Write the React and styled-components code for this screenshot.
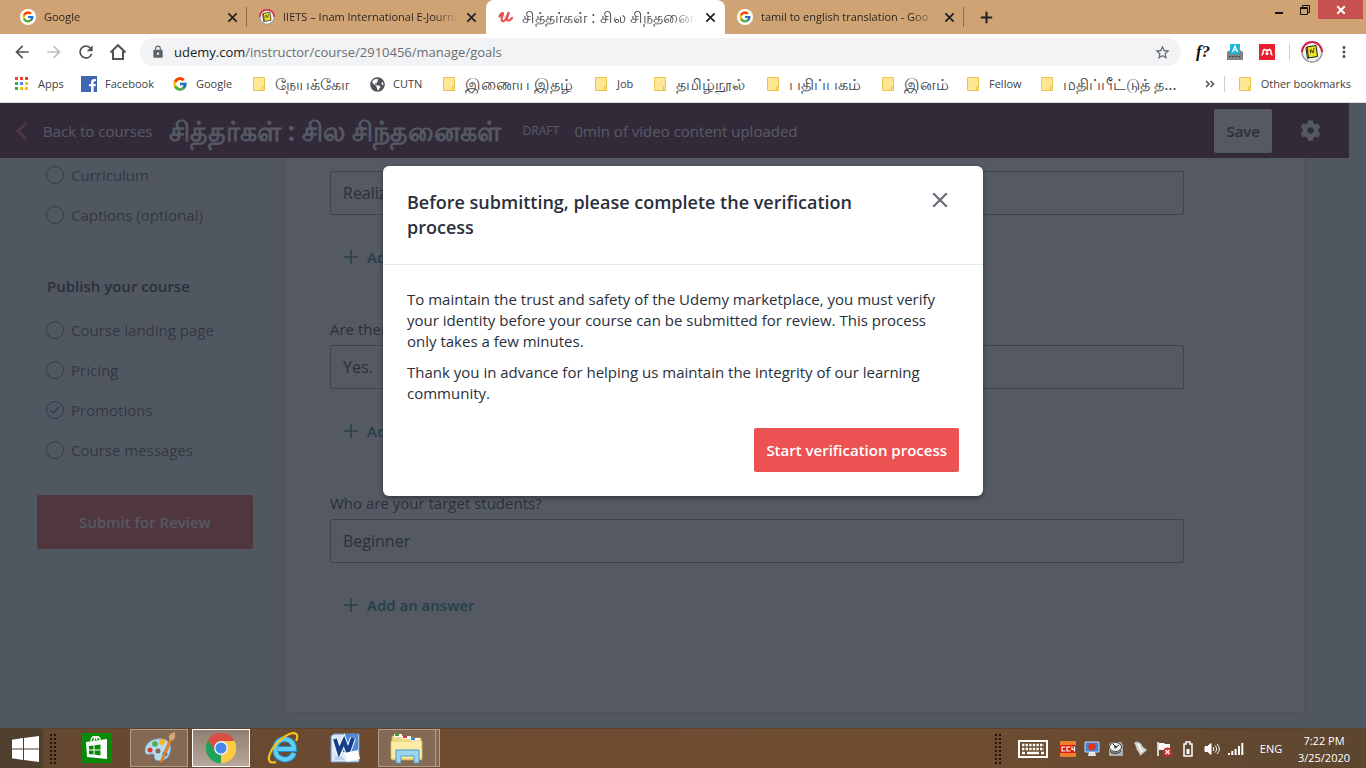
import React from 'react';
import styled, { createGlobalStyle } from 'styled-components';
import { FcGoogle } from 'react-icons/fc';
import { FaCog, FaFacebookF, FaGlobeAmericas } from 'react-icons/fa';
import { MdArrowBack, MdArrowForward, MdRefresh, MdLock, MdStarOutline, MdMoreVert } from 'react-icons/md';

const GlobalStyle = createGlobalStyle`
  * {
    box-sizing: border-box;
  }
  body {
    margin: 0;
    font-family: "Open Sans", "Noto Sans", sans-serif;
  }
  button, input {
    font-family: inherit;
  }
  button {
    border: 0;
    padding: 0;
    background: none;
    cursor: pointer;
  }
  a {
    color: inherit;
    text-decoration: none;
  }
  svg {
    display: block;
    flex-shrink: 0;
  }
`;

const Desktop = styled.div`
  display: flex;
  flex-direction: column;
  height: 100vh;
  overflow: hidden;
`;

/* ---------- tab strip ---------- */

const TabStrip = styled.div`
  display: flex;
  height: 34px;
  padding-left: 8px;
  background: #cfa374;
`;

const Tab = styled.div`
  display: flex;
  align-items: center;
  gap: 8px;
  width: 239px;
  padding: 0 9px 0 12px;
  border-radius: 8px 8px 0 0;
  background: ${({ $active }) => ($active ? '#fff' : 'transparent')};
  color: ${({ $active }) => ($active ? '#45484c' : '#2b2622')};
`;

const TabTitle = styled.span`
  flex: 1;
  min-width: 0;
  overflow: hidden;
  white-space: nowrap;
  font-size: ${({ $big }) => ($big ? '16px' : '11px')};
  line-height: 24px;
  mask-image: linear-gradient(to right, #000 86%, transparent);
`;

const TabClose = styled.button`
  display: flex;
  color: #202124;
`;

const TabDivider = styled.span`
  align-self: center;
  width: 1px;
  height: 20px;
  margin-left: -1px;
  background: #8b6d4d;
`;

const NewTab = styled.button`
  align-self: center;
  margin-left: 16px;
  color: #202124;
`;

const WindowButtons = styled.div`
  display: flex;
  align-items: flex-start;
  margin-left: auto;
  padding-right: 3px;
`;

const WindowButton = styled.button`
  display: flex;
  align-items: center;
  justify-content: center;
  width: ${({ $close }) => ($close ? '45px' : '26px')};
  height: 19px;
  background: ${({ $close }) => ($close ? '#c75050' : 'transparent')};
`;

/* ---------- toolbar ---------- */

const Toolbar = styled.div`
  display: flex;
  align-items: center;
  height: 36px;
  padding: 0 6px;
  background: #fff;
`;

const ToolButton = styled.button`
  display: flex;
  align-items: center;
  justify-content: center;
  width: 32px;
  height: 28px;
  color: ${({ $faded }) => ($faded ? '#bdbfc2' : '#4f5357')};
`;

const AddressBar = styled.label`
  display: flex;
  flex: 1;
  align-items: center;
  height: 28px;
  margin: 0 6px;
  padding: 0 10px 0 11px;
  border-radius: 14px;
  background: #f1f3f4;
  color: #202124;
  font-size: 13px;
`;

const Host = styled.span`
  margin-left: 9px;
`;

const PathInput = styled.input`
  flex: 1;
  padding: 0;
  border: 0;
  outline: 0;
  background: transparent;
  color: #6a6e73;
  font-size: 13px;
`;

const ToolDivider = styled.span`
  width: 1px;
  height: 16px;
  margin: 0 6px;
  background: #cdcfd2;
`;

const FunctionMark = styled.span`
  color: #111;
  font: italic bold 17px "Liberation Serif", serif;
`;

/* ---------- bookmarks ---------- */

const BookmarkBar = styled.nav`
  display: flex;
  align-items: center;
  height: 33px;
  padding: 0 15px 4px 14px;
  border-bottom: 1px solid #d9dadd;
  background: #fff;
`;

const Bookmark = styled.a`
  display: flex;
  align-items: center;
  gap: 8px;
  width: ${({ $width }) => ($width ? `${$width}px` : 'auto')};
  color: #3c4043;
  font-size: ${({ $big }) => ($big ? '16px' : '11px')};
  line-height: 24px;
  white-space: nowrap;
`;

const MoreBookmarks = styled.button`
  margin-left: auto;
  color: #4f5357;
`;

const BookmarkDivider = styled(ToolDivider)`
  margin: 0 12px 0 9px;
`;

/* ---------- udemy page ---------- */

const Page = styled.div`
  position: relative;
  display: flex;
  flex: 1;
  flex-direction: column;
  min-height: 0;
  padding-right: 17px;
  overflow: hidden;
  background: #f0f2f5;
  color: #29303b;
  font-size: 15px;
`;

const CourseHeader = styled.header`
  z-index: 1;
  display: flex;
  align-items: center;
  height: 55px;
  padding: 0 28px 0 16px;
  background: #561236;
  color: #fff;
  white-space: nowrap;
`;

const BackLink = styled.a`
  display: flex;
  align-items: center;
  gap: 15px;
`;

const CourseTitle = styled.h1`
  width: 338px;
  margin: 0 16px;
  font-size: 27px;
  font-weight: 700;
  line-height: 40px;
`;

const Draft = styled.span`
  width: 36px;
  margin-right: 16px;
  font-size: 12px;
`;

const SaveButton = styled.button`
  height: 44px;
  margin: 0 28px 0 auto;
  padding: 0 12px;
  border-radius: 2px;
  background: #fff;
  color: #29303b;
  font-size: 15px;
  font-weight: 600;
`;

const SettingsButton = styled.button`
  color: #fff;
`;

const Content = styled.div`
  display: flex;
  flex: 1;
  min-height: 0;
`;

const Sidebar = styled.aside`
  width: 285px;
  padding: 5px 32px 0 37px;
`;

const NavList = styled.ul`
  display: flex;
  flex-direction: column;
  gap: 16px;
  margin: 0;
  padding: 0 0 0 9px;
  list-style: none;
`;

const NavItem = styled.a`
  display: flex;
  align-items: center;
  gap: 7px;
  line-height: 24px;
  color: #505763;
`;

const NavHeading = styled.h2`
  margin: 47px 0 20px 10px;
  font-size: 15px;
  font-weight: 600;
  line-height: 24px;
`;

const SubmitButton = styled.button`
  width: 100%;
  height: 54px;
  margin-top: 33px;
  border-radius: 2px;
  background: #ec5252;
  color: #fff;
  font-size: 15px;
  font-weight: 600;
`;

const Panel = styled.main`
  flex: 1;
  margin: 0 45px 16px 0;
  padding: 13px 120px 0 45px;
  background: #fff;
  box-shadow: 0 0 8px 2px rgba(41, 48, 59, 0.12);
`;

const Question = styled.div`
  margin-bottom: 40px;
`;

const QuestionLabel = styled.label`
  display: block;
  margin-bottom: 5px;
  line-height: 21px;
`;

const AnswerInput = styled.input`
  display: block;
  width: 100%;
  height: 44px;
  padding: 0 12px;
  border: 1px solid #8a92a3;
  border-radius: 2px;
  background: #fff;
  color: #29303b;
  font-size: 16px;
`;

const AddButton = styled.button`
  display: flex;
  align-items: center;
  gap: 8px;
  height: 44px;
  margin: 20px 0 0 13px;
  color: #0f7c90;
  font-size: 15px;
  font-weight: 600;
`;

/* ---------- dialog ---------- */

const Overlay = styled.div`
  position: absolute;
  inset: 0;
  z-index: 2;
  display: flex;
  align-items: flex-start;
  justify-content: center;
  padding-top: 63px;
  background: rgba(41, 48, 59, 0.8);
`;

const Dialog = styled.section`
  width: 100%;
  max-width: 600px;
  border-radius: 6px;
  background: #fff;
  box-shadow: 0 2px 4px rgba(20, 23, 28, 0.5);
`;

const DialogHeader = styled.div`
  display: flex;
  align-items: flex-start;
  justify-content: space-between;
  gap: 48px;
  padding: 24px 34px 24px 24px;
  border-bottom: 1px solid #e8e9eb;
`;

const DialogTitle = styled.h2`
  margin: 0;
  font-size: 18px;
  font-weight: 600;
  line-height: 25px;
`;

const DialogClose = styled.button`
  margin-top: 1px;
`;

const DialogBody = styled.div`
  padding: 24px;
`;

const Paragraph = styled.p`
  margin: 0 0 10px;
  line-height: 21px;
`;

const DialogActions = styled.div`
  display: flex;
  justify-content: flex-end;
  padding-top: 14px;
`;

const VerifyButton = styled.button`
  height: 44px;
  padding: 0 12px;
  border-radius: 2px;
  background: #ec5252;
  color: #fff;
  font-size: 15px;
  font-weight: 600;
`;

/* ---------- taskbar ---------- */

const Taskbar = styled.footer`
  display: flex;
  height: 40px;
  border-top: 1px solid #5a4230;
  background: linear-gradient(to right, #644830, #6f4c31 40%, #6f4d31 70%, #5c4630);
  color: #fff;
  font-size: 12px;
`;

const StartButton = styled.button`
  display: flex;
  align-items: center;
  justify-content: center;
  width: 43px;
  padding-left: 7px;
  background: #4f3f2e;
`;

const Grip = styled.span`
  align-self: center;
  width: 8px;
  height: 30px;
  margin: 0 7px;
  background: radial-gradient(circle at 1px 1px, #20160e 1px, transparent 1px) 0 0 / 4px 4px;
`;

const TaskList = styled.div`
  display: flex;
  padding-left: 3px;
`;

const TaskButton = styled.button`
  display: flex;
  align-items: center;
  justify-content: center;
  width: 58px;
  height: 38px;
  margin-right: 4px;
  border: 1px solid ${({ $state }) => ($state === 'active' ? '#fff' : $state === 'open' ? '#b39f8e' : 'transparent')};
  background: ${({ $state }) =>
    $state === 'active' ? 'linear-gradient(#8f7f70, #b7a89b)' : $state === 'open' ? '#846a54' : 'transparent'};
`;

const StackEdge = styled.span`
  width: 4px;
  height: 38px;
  margin-left: -4px;
  border: 1px solid #b39f8e;
  border-left: 0;
  background: #846a54;
`;

const Tray = styled.div`
  display: flex;
  align-items: center;
  margin-left: auto;
  padding-right: 12px;
`;

const TrayButton = styled.button`
  display: flex;
  align-items: center;
  justify-content: center;
  width: ${({ $wide }) => ($wide ? '46px' : '24px')};
  color: #fff;
  font-size: ${({ $wide }) => ($wide ? '11px' : '12px')};
`;

const Clock = styled.div`
  width: 60px;
  font-size: 11px;
  line-height: 17px;
  text-align: center;
`;

/* ---------- drawings ---------- */

const GoogleIcon = ({ round }) =>
  round ? (
    <svg width="16" height="16" viewBox="0 0 16 16">
      <circle cx="8" cy="8" r="8" fill="#fff" />
      <g transform="translate(1.500 1.500)"><FcGoogle size={13} /></g>
    </svg>
  ) : (
    <FcGoogle size={16} />
  );

const JournalIcon = ({ size }) => (
  <svg width={size} height={size} viewBox="0 0 22 22">
    <circle cx="11" cy="11" r="10" fill="#f4f2ec" stroke="#9a9a9a" strokeWidth="1.500" />
    <path d="M1 11a10 10 0 0 1 20 0" fill="none" stroke="#d4234b" strokeWidth="2" />
    <path d="M6 6l9-1.500 1.500 11L7.500 17z" fill="#ece11d" stroke="#222" strokeWidth="1" />
    <path d="M6 6l-1 1 1.500 10.500 1-.5M9 9l1 3" fill="none" stroke="#222" strokeWidth="1" />
    <path d="M10 8l2 4 1-5" fill="none" stroke="#222" strokeWidth=".8" />
  </svg>
);

const UdemyIcon = () => (
  <svg width="16" height="16" viewBox="0 0 16 16" fill="none" stroke="#ec5252" strokeLinecap="round">
    <path d="M1.500 7.500C3 4.500 4.800 3.500 5 4.500S3 9 3.600 11s3 1.500 4.500-1.500L10.500 4" strokeWidth="2.200" />
    <path d="M10.500 4L9 9.500c-.6 2.500 2 3.500 5-.5" strokeWidth="2.200" />
  </svg>
);

const CrossIcon = ({ size, width, color = 'currentColor' }) => (
  <svg width={size} height={size} viewBox="0 0 16 16" stroke={color} strokeWidth={width}>
    <path d="M2 2l12 12M14 2L2 14" />
  </svg>
);

const PlusIcon = ({ size, width }) => (
  <svg width={size} height={size} viewBox="0 0 16 16" stroke="currentColor" strokeWidth={width}>
    <path d="M8 1v14M1 8h14" />
  </svg>
);

const FolderIcon = () => (
  <svg width="16" height="16" viewBox="0 0 16 16">
    <path d="M2.500 1.500h11v13h-11z" fill="#ffe694" stroke="#e8c64d" />
    <path d="M11.500 14.500v-4h2v4z" fill="#ffe694" stroke="#e8c64d" />
  </svg>
);

const AppsIcon = () => {
  const colors = ['#ea4335', '#ea4335', '#ea4335', '#34a853', '#4285f4', '#fbbc05', '#34a853', '#fbbc05', '#fbbc05'];
  return (
    <svg width="16" height="16" viewBox="0 0 16 16">
      {colors.map((c, i) => (
        <rect key={i} x={1 + (i % 3) * 5} y={1 + Math.floor(i / 3) * 5} width="3" height="3" fill={c} />
      ))}
    </svg>
  );
};

const FacebookIcon = () => (
  <svg width="16" height="16" viewBox="0 0 16 16">
    <rect width="16" height="16" fill="#4267b2" />
    <g transform="translate(5 3)" color="#fff"><FaFacebookF size={13} /></g>
  </svg>
);

const HomeIcon = () => (
  <svg width="18" height="18" viewBox="0 0 18 18" fill="none" stroke="currentColor" strokeWidth="2">
    <path d="M1.500 9.500L9 2.200l7.500 7.300M4 8v8h10V8" />
  </svg>
);

const ReaderIcon = () => (
  <svg width="16" height="16" viewBox="0 0 16 16">
    <path d="M0 8l3-2h10l3 2v8H0z" fill="#7d8387" />
    <path d="M3 0h10v10H3z" fill="#1fb6dc" />
    <path d="M5.500 8L8 2l2.500 6M6.500 6h3" fill="none" stroke="#fff" strokeWidth="1.200" />
    <path d="M2 12.500h12" stroke="#42474b" strokeDasharray="2 1" />
  </svg>
);

const MendeleyIcon = () => (
  <svg width="16" height="16" viewBox="0 0 16 16">
    <rect width="16" height="16" fill="#e8202e" />
    <path d="M2.500 11c1.500 0 1.500-1 1.500-3 0-3 2.500-3 4-1 1.500-2 4-2 4 1 0 2 0 3 1.500 3" fill="none" stroke="#fff" strokeWidth="1.600" />
    <circle cx="8" cy="9.500" r="1.600" fill="#fff" />
  </svg>
);

const StatusIcon = ({ done }) => (
  <svg width="18" height="18" viewBox="0 0 18 18" fill="none" stroke={done ? '#0f7c90' : '#686f7a'}>
    <circle cx="9" cy="9" r="8.500" />
    {done && <path d="M5 9.500l2.700 2.700L13 6" strokeWidth="1.500" />}
  </svg>
);

const WindowsIcon = () => (
  <svg width="27" height="26" viewBox="0 0 27 26" fill="#fff">
    <path d="M0 3.700L11 2v10.500H0zM12 1.900L27 0v12.500H12zM0 13.500h11V24L0 22.300zM12 13.500h15V26l-15-1.900z" />
  </svg>
);

const StoreIcon = () => (
  <svg width="30" height="30" viewBox="0 0 30 30">
    <rect width="30" height="30" fill="#078a07" />
    <path d="M4 9l21-3v20L5 24z" fill="#fff" />
    <path d="M9 8c0-5 6-6 6-1M12 8c0-6 6-5 6-1" fill="none" stroke="#fff" strokeWidth="1.300" />
    <path d="M7 13l4.500-.6v4H7zM12.500 12.200l6-.7v5h-6zM7 17.400h4.500v4L7 21zM12.500 17.400h6v5l-6-.8z" fill="#078a07" />
  </svg>
);

const PaintIcon = () => (
  <svg width="34" height="34" viewBox="0 0 34 34">
    <path d="M3 20C3 11 12 7 20 8c9 1 10 9 7 16-2 5-9 7-13 5-3-2 0-5-3-6s-7 3-8-3z" fill="#b9dbef" stroke="#7facc9" />
    <circle cx="8" cy="19" r="2.500" fill="#d93a2b" />
    <circle cx="13" cy="13" r="2.800" fill="#4fae45" />
    <circle cx="20" cy="11" r="3" fill="#f3b723" />
    <circle cx="16" cy="20" r="2.500" fill="#846a54" />
    <circle cx="23" cy="23" r="2.500" fill="#3b7fd6" />
    <path d="M28 7L18 31l2 1L30 9z" fill="#e88a2a" stroke="#b5621a" strokeWidth=".6" />
    <path d="M27 8c-1-4 2-6 6-7 0 4 1 6-3 9z" fill="#d2a679" />
  </svg>
);

const ChromeIcon = () => (
  <svg width="30" height="30" viewBox="0 0 30 30">
    <path d="M15 15L2 7.500A15 15 0 0 1 28 7.500z" fill="#d94f41" />
    <path d="M15 15l13-7.500A15 15 0 0 1 15 30z" fill="#fccd44" />
    <path d="M15 15v15A15 15 0 0 1 2 7.500z" fill="#23a05a" />
    <path d="M15 8h13.400A15 15 0 0 1 15 30l6-11.500z" fill="#fccd44" />
    <path d="M2 7.500L9 18.500 15 22l-1 8A15 15 0 0 1 2 7.500z" fill="#23a05a" />
    <path d="M2 7.500A15 15 0 0 1 28.400 8H15l-6 9z" fill="#d94f41" />
    <circle cx="15" cy="15" r="6.900" fill="#f2f2f2" />
    <circle cx="15" cy="15" r="5.500" fill="#4688f1" />
  </svg>
);

const ExplorerIcon = () => (
  <svg width="32" height="32" viewBox="0 0 32 32" fill="none">
    <path d="M27 21c-2 6-9 8-14 5-6-3-6-13-1-17 6-4 15-1 15 8H11" stroke="#1f8fce" strokeWidth="6" />
    <path d="M27 21c-2 6-9 8-14 5-6-3-6-13-1-17 6-4 15-1 15 8H11" stroke="#63cdf5" strokeWidth="4" />
    <path d="M9 30c-4 1-8 1-7-5C4 15 16 3 26 1c5 0 5 4 3 8" stroke="#f5c21a" strokeWidth="2.200" />
  </svg>
);

const WordIcon = () => (
  <svg width="30" height="30" viewBox="0 0 30 30">
    <path d="M1 3l3-2h25v28H1z" fill="#dce9f8" stroke="#6d93c6" />
    <path d="M13 1h15v18H13z" fill="#4d8bd8" />
    <path d="M5 6l4 13 5-11 4 11 5-14" fill="none" stroke="#fff" strokeWidth="6" />
    <path d="M5 6l4 13 5-11 4 11 5-14" fill="none" stroke="#173f86" strokeWidth="4" />
    <path d="M14 20l14-3 2 9-13 3z" fill="#fff" />
    <path d="M5 24h7M5 26h9" stroke="#9cb6da" />
  </svg>
);

const FoldersIcon = () => (
  <svg width="34" height="32" viewBox="0 0 34 32">
    <path d="M2 4h9l2 2h18l1 22H2z" fill="#f1dc84" stroke="#c9a94b" strokeWidth=".7" />
    <path d="M4 2h8v3H4zM12 4h9v3h-9zM20 6h10v3H20z" fill="#fff" />
    <path d="M5 2h4v2H5z" fill="#2ea52e" />
    <path d="M13 4h4v2h-4z" fill="#d33b2a" />
    <path d="M21 6h4v2h-4z" fill="#2b8fe0" />
    <path d="M1 9h31v18H1z" fill="#fbeda6" stroke="#d8bd62" strokeWidth=".7" />
    <path d="M6 31V18h23v13h-5v-7H11v7z" fill="#9bd4ec" stroke="#4d9cc0" />
  </svg>
);

const KeyboardIcon = () => (
  <svg width="30" height="18" viewBox="0 0 30 18">
    <path d="M1 1h28v16H1z" fill="none" stroke="#fff" strokeWidth="2" />
    <path d="M4 5h22M4 9h22" stroke="#fff" strokeWidth="2.400" strokeDasharray="2.400 1.200" />
    <path d="M4 13h3M9 13h12M23 13h3" stroke="#fff" strokeWidth="2.400" />
  </svg>
);

const Cc4Icon = () => (
  <svg width="16" height="16" viewBox="0 0 16 16">
    <rect width="16" height="16" rx="1" fill="#f08030" />
    <path d="M0 4h16v8H0z" fill="#d8200f" />
    <path d="M5.500 6H2v4h3.500M10.500 6H7v4h3.500M12 5.500v3h3M14.500 5.500v5" fill="none" stroke="#fff" strokeWidth="1.200" />
  </svg>
);

const MonitorIcon = () => (
  <svg width="16" height="16" viewBox="0 0 16 16">
    <path d="M1 1h14v10H1z" fill="#3f86e8" stroke="#c9d4e2" />
    <path d="M5 2l3 1 3-1 1 5-3 3-1-2-1 2-3-3z" fill="#e0341f" />
    <path d="M5 11h6l1 4H4z" fill="#e4e8ec" />
  </svg>
);

const DiskIcon = () => (
  <svg width="16" height="16" viewBox="0 0 16 16">
    <path d="M1 3l3-2h9l2 3v11H1z" fill="#a9adb0" />
    <ellipse cx="7.500" cy="6" rx="6" ry="4.500" fill="#f5f5f5" stroke="#3a3a3a" />
    <circle cx="7.500" cy="6" r="1.500" fill="#555" />
    <path d="M5 3l3 3 3-2M2 10c2 3 8 3 11 0" fill="none" stroke="#2b2b2b" />
  </svg>
);

const BellIcon = () => (
  <svg width="16" height="16" viewBox="0 0 16 16">
    <path d="M2 2c4-3 7 0 9 4l4 3-7 6c0-3-2-4-3-6C4 7 4 4 2 2z" fill="#d4d4d2" stroke="#8c8a86" strokeWidth=".6" />
    <path d="M6 3l4 8" stroke="#fff" strokeWidth="1.500" />
  </svg>
);

const FlagIcon = () => (
  <svg width="16" height="16" viewBox="0 0 16 16">
    <path d="M2 1v14" stroke="#fff" strokeWidth="1.500" />
    <path d="M3 2h5l1 1h5v7H9L8 9H3z" fill="#fff" />
    <circle cx="11.500" cy="11" r="4.500" fill="#d62b2b" />
    <path d="M9.500 9l4 4M13.500 9l-4 4" stroke="#fff" strokeWidth="1.400" />
  </svg>
);

const BatteryIcon = () => (
  <svg width="10" height="16" viewBox="0 0 10 16">
    <path d="M1 3h2V1h4v2h2v12H1z" fill="none" stroke="#fff" strokeWidth="1.500" />
    <path d="M3.500 8h3v5h-3z" fill="#fff" />
  </svg>
);

const VolumeIcon = () => (
  <svg width="16" height="14" viewBox="0 0 16 14" fill="none" stroke="#fff">
    <path d="M1 4.500h2.500L7 1.500v11L3.500 9.500H1z" fill="#fff" />
    <path d="M9 5c1 1 1 3 0 4M11 3.500c2 2 2 5 0 7M13 2c3 3 3 7 0 10" />
  </svg>
);

const SignalIcon = () => (
  <svg width="16" height="12" viewBox="0 0 16 12" fill="#fff">
    <path d="M0 10h2v2H0zM3.300 8h2v4h-2zM6.600 6h2v6h-2zM10 3h2v9h-2zM13.300 0h2v12h-2z" />
  </svg>
);

/* ---------- data ---------- */

const tabs = [
  { title: 'Google', icon: <GoogleIcon round /> },
  { title: 'IIETS – Inam International E-Journal', icon: <JournalIcon size={16} /> },
  { title: 'சித்தர்கள் : சில சிந்தனைகள்', icon: <UdemyIcon />, active: true, big: true },
  { title: 'tamil to english translation - Goo', icon: <GoogleIcon round /> },
];

const bookmarks = [
  { label: 'Apps', icon: <AppsIcon />, width: 67 },
  { label: 'Facebook', icon: <FacebookIcon />, width: 91 },
  { label: 'Google', icon: <GoogleIcon />, width: 79 },
  { label: 'நேயக்கோ', icon: <FolderIcon />, width: 119, big: true },
  { label: 'CUTN', icon: <FaGlobeAmericas size={15} color="#4f5357" />, width: 71 },
  { label: 'இணைய இதழ்', icon: <FolderIcon />, width: 152, big: true },
  { label: 'Job', icon: <FolderIcon />, width: 59 },
  { label: 'தமிழ்நூல்', icon: <FolderIcon />, width: 113, big: true },
  { label: 'பதிப்பகம்', icon: <FolderIcon />, width: 115, big: true },
  { label: 'இனம்', icon: <FolderIcon />, width: 85, big: true },
  { label: 'Fellow', icon: <FolderIcon />, width: 74 },
  { label: 'மதிப்பீட்டுத் த...', icon: <FolderIcon />, width: 136, big: true },
];

const questions = [
  { id: 'learn', value: 'Realization' },
  { id: 'requirements', label: 'Are there any course requirements or prerequisites?', value: 'Yes.' },
  { id: 'target', label: 'Who are your target students?', value: 'Beginner' },
];

const createItems = [{ label: 'Curriculum' }, { label: 'Captions (optional)' }];
const publishItems = [
  { label: 'Course landing page' },
  { label: 'Pricing' },
  { label: 'Promotions', done: true },
  { label: 'Course messages' },
];

const trayIcons = [
  { name: 'CC4', icon: <Cc4Icon /> },
  { name: 'Display', icon: <MonitorIcon /> },
  { name: 'Disk', icon: <DiskIcon /> },
  { name: 'Notifications', icon: <BellIcon /> },
  { name: 'Action Center', icon: <FlagIcon /> },
  { name: 'Battery', icon: <BatteryIcon /> },
  { name: 'Volume', icon: <VolumeIcon /> },
  { name: 'Network', icon: <SignalIcon /> },
];

const BrowserTop = () => (
  <>
    <TabStrip>
      {tabs.map((tab, i) => (
        <React.Fragment key={tab.title}>
          <Tab $active={tab.active}>
            {tab.icon}
            <TabTitle $big={tab.big}>{tab.title}</TabTitle>
            <TabClose aria-label="Close tab"><CrossIcon size={11} width={2.5} /></TabClose>
          </Tab>
          {(i === 0 || i === 3) && <TabDivider />}
        </React.Fragment>
      ))}
      <NewTab aria-label="New tab"><PlusIcon size={13} width={2.5} /></NewTab>
      <WindowButtons>
        <WindowButton aria-label="Minimize">
          <svg width="8" height="10" viewBox="0 0 8 10"><path d="M0 8h8" stroke="#111" strokeWidth="2" /></svg>
        </WindowButton>
        <WindowButton aria-label="Restore">
          <svg width="10" height="10" viewBox="0 0 10 10" fill="none" stroke="#111">
            <path d="M.5 2.500h7v7h-7zM.5 3.500h7M2.500 2.500v-2h7v7h-2" />
          </svg>
        </WindowButton>
        <WindowButton $close aria-label="Close"><CrossIcon size={10} width={3} color="#fff" /></WindowButton>
      </WindowButtons>
    </TabStrip>
    <Toolbar>
      <ToolButton aria-label="Back"><MdArrowBack size={20} /></ToolButton>
      <ToolButton aria-label="Forward" $faded><MdArrowForward size={20} /></ToolButton>
      <ToolButton aria-label="Reload"><MdRefresh size={20} /></ToolButton>
      <ToolButton aria-label="Home"><HomeIcon /></ToolButton>
      <AddressBar>
        <MdLock size={14} color="#5f6368" />
        <Host>udemy.com</Host>
        <PathInput aria-label="Address" defaultValue="/instructor/course/2910456/manage/goals" />
        <MdStarOutline size={17} color="#5f6368" />
      </AddressBar>
      <ToolButton aria-label="Fonts"><FunctionMark>f?</FunctionMark></ToolButton>
      <ToolButton aria-label="Reader"><ReaderIcon /></ToolButton>
      <ToolButton aria-label="Mendeley"><MendeleyIcon /></ToolButton>
      <ToolDivider />
      <ToolButton aria-label="Profile"><JournalIcon size={22} /></ToolButton>
      <ToolButton aria-label="Menu"><MdMoreVert size={18} /></ToolButton>
    </Toolbar>
    <BookmarkBar>
      {bookmarks.map((b) => (
        <Bookmark key={b.label} href="#" $width={b.width} $big={b.big}>{b.icon}{b.label}</Bookmark>
      ))}
      <MoreBookmarks aria-label="More bookmarks">
        <svg width="10" height="8" viewBox="0 0 10 8" fill="none" stroke="currentColor" strokeWidth="1.600">
          <path d="M1 1l3 3-3 3M5.500 1l3 3-3 3" />
        </svg>
      </MoreBookmarks>
      <BookmarkDivider />
      <Bookmark href="#"><FolderIcon />Other bookmarks</Bookmark>
    </BookmarkBar>
  </>
);

const NavItems = ({ items }) => (
  <NavList>
    {items.map((item) => (
      <li key={item.label}>
        <NavItem href="#"><StatusIcon done={item.done} />{item.label}</NavItem>
      </li>
    ))}
  </NavList>
);

const CoursePage = () => (
  <Page>
    <CourseHeader>
      <BackLink href="#">
        <svg width="12" height="18" viewBox="0 0 12 18" fill="none" stroke="#ec5252" strokeWidth="2.500">
          <path d="M10.500 1L2 9l8.500 8" />
        </svg>
        Back to courses
      </BackLink>
      <CourseTitle>சித்தர்கள் : சில சிந்தனைகள்</CourseTitle>
      <Draft>DRAFT</Draft>
      <span>0min of video content uploaded</span>
      <SaveButton>Save</SaveButton>
      <SettingsButton aria-label="Settings"><FaCog size={21} /></SettingsButton>
    </CourseHeader>
    <Content>
      <Sidebar>
        <NavItems items={createItems} />
        <NavHeading>Publish your course</NavHeading>
        <NavItems items={publishItems} />
        <SubmitButton>Submit for Review</SubmitButton>
      </Sidebar>
      <Panel>
        {questions.map((q) => (
          <Question key={q.id}>
            {q.label && <QuestionLabel htmlFor={q.id}>{q.label}</QuestionLabel>}
            <AnswerInput id={q.id} aria-label={q.label ? undefined : 'Answer'} defaultValue={q.value} />
            <AddButton><PlusIcon size={16} width={1.5} />Add an answer</AddButton>
          </Question>
        ))}
      </Panel>
    </Content>
    <Overlay>
      <Dialog role="dialog" aria-labelledby="dialog-title">
        <DialogHeader>
          <DialogTitle id="dialog-title">Before submitting, please complete the verification process</DialogTitle>
          <DialogClose aria-label="Close"><CrossIcon size={18} width={2} color="#686f7a" /></DialogClose>
        </DialogHeader>
        <DialogBody>
          <Paragraph>
            To maintain the trust and safety of the Udemy marketplace, you must verify your identity before your
            course can be submitted for review. This process only takes a few minutes.
          </Paragraph>
          <Paragraph>
            Thank you in advance for helping us maintain the integrity of our learning community.
          </Paragraph>
          <DialogActions>
            <VerifyButton>Start verification process</VerifyButton>
          </DialogActions>
        </DialogBody>
      </Dialog>
    </Overlay>
  </Page>
);

const WindowsTaskbar = () => (
  <Taskbar>
    <StartButton aria-label="Start"><WindowsIcon /></StartButton>
    <Grip />
    <TaskList>
      <TaskButton aria-label="Store"><StoreIcon /></TaskButton>
      <TaskButton aria-label="Paint" $state="open"><PaintIcon /></TaskButton>
      <TaskButton aria-label="Chrome" $state="active"><ChromeIcon /></TaskButton>
      <TaskButton aria-label="Internet Explorer"><ExplorerIcon /></TaskButton>
      <TaskButton aria-label="Word"><WordIcon /></TaskButton>
      <TaskButton aria-label="File Explorer" $state="open"><FoldersIcon /></TaskButton>
      <StackEdge />
    </TaskList>
    <Tray>
      <Grip />
      <TrayButton $wide aria-label="Keyboard"><KeyboardIcon /></TrayButton>
      {trayIcons.map((t) => (
        <TrayButton key={t.name} aria-label={t.name}>{t.icon}</TrayButton>
      ))}
      <TrayButton $wide>ENG</TrayButton>
      <Clock>7:22 PM<br />3/25/2020</Clock>
    </Tray>
  </Taskbar>
);

const App = () => (
  <Desktop>
    <GlobalStyle />
    <BrowserTop />
    <CoursePage />
    <WindowsTaskbar />
  </Desktop>
);

export default App;
